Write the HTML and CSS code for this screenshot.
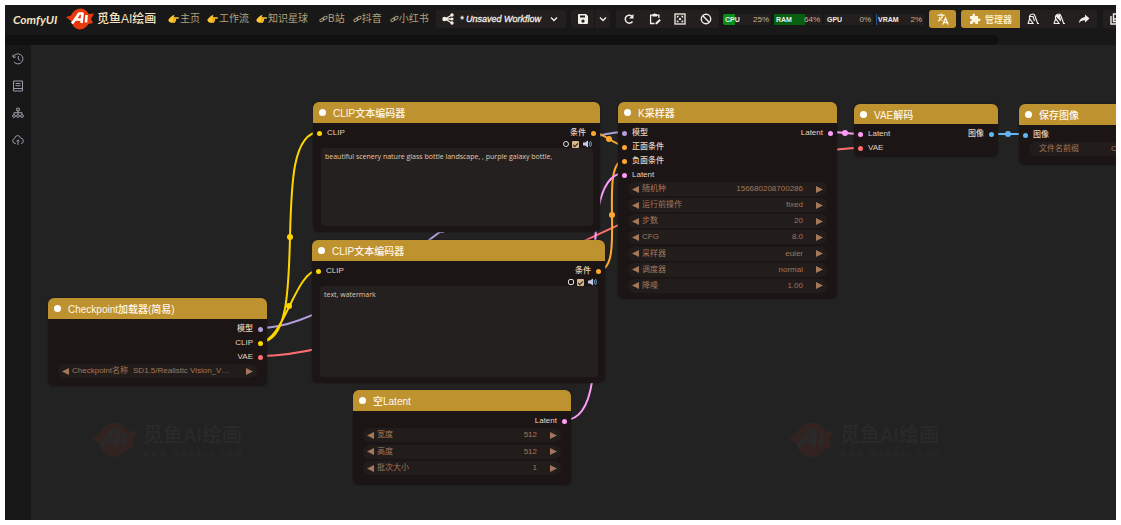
FILE: index.html
```html
<!DOCTYPE html>
<html lang="zh-CN">
<head>
<meta charset="utf-8">
<title>ComfyUI</title>
<link rel="stylesheet" href="styles.css">
</head>
<body>
<svg class="defs" aria-hidden="true">
  <symbol id="hand" viewBox="0 0 12 10"><path fill="#ffc62e" d="M0.5 5.5 3 2.8 6 0.6 7.2 1.4 6 3H11q1 .1 1 .9t-1 .9H8.3q.8.4.5 1.1.3.8-.4 1.2.1.8-.6 1.1 0 .9-1 1H3.5Q1 8.8.5 7z"/><path stroke="#d9901c" stroke-width=".6" d="M5.5 4.9h3M5.5 6.2h3M5.5 7.5h2.6"/></symbol>
  <symbol id="chain" viewBox="0 0 10 8"><g fill="none" stroke="currentColor" stroke-width="1"><rect x=".8" y="3.6" width="5" height="2.8" rx="1.4" transform="rotate(-32 3.3 5)"/><rect x="4.2" y="1.5" width="5" height="2.8" rx="1.4" transform="rotate(-32 6.7 2.9)"/></g></symbol>
  <symbol id="logo" viewBox="0 0 28 22"><path class="splash" d="M0 9 5 7.500Q8 1 14 .5 20 .5 22.500 6L28 5.500 25 11 27 15 22.500 16Q19 21.500 13 21.500 7 20.500 5 13z"/><path fill="none" stroke="currentColor" stroke-width="2.600" stroke-linejoin="round" d="M6 15.500Q11 9 13 5.500H16.500L15.500 15M10 11.500H15.500M20.500 7 20 14.500"/></symbol>
  <symbol id="down" viewBox="0 0 8 6"><path fill="none" stroke="currentColor" stroke-width="1.400" d="m1 1.500 3 3 3-3"/></symbol>
  <symbol id="larrow" viewBox="0 0 7 7"><path fill="currentColor" d="M7 0v7L0 3.500z"/></symbol>
  <symbol id="rarrow" viewBox="0 0 7 7"><path fill="currentColor" d="M0 0v7l7-3.500z"/></symbol>
  <symbol id="speaker" viewBox="0 0 9 8"><path fill="#c9c9dd" d="M0 2.500h2L5 .5v7L2 5.500H0z"/><path fill="none" stroke="#6a9cc4" d="M6 2q1.500 2 0 4M7.500 1q2 3 0 6"/></symbol>
</svg>
<div class="app">
  <header class="topbar">
    <h1 class="brand">ComfyUI</h1>
    <svg class="logo"><use href="#logo"/></svg>
    <span class="studio">觅鱼AI绘画</span>
    <nav class="links">
      <a href="#"><svg class="hand"><use href="#hand"/></svg>主页</a>
      <a href="#"><svg class="hand"><use href="#hand"/></svg>工作流</a>
      <a href="#"><svg class="hand"><use href="#hand"/></svg>知识星球</a>
    </nav>
    <nav class="links social">
      <a href="#"><svg class="chain"><use href="#chain"/></svg>B站</a>
      <a href="#"><svg class="chain"><use href="#chain"/></svg>抖音</a>
      <a href="#"><svg class="chain"><use href="#chain"/></svg>小红书</a>
    </nav>
    <button class="group workflow">
      <svg class="icon" viewBox="0 0 12 12"><path fill="none" stroke="currentColor" stroke-width="1.300" d="M10 2 3 6l7 4M3 6h7"/><g fill="currentColor"><circle cx="2.500" cy="6" r="2.200"/><circle cx="10" cy="2" r="1.700"/><circle cx="10" cy="6" r="1.500"/><circle cx="10" cy="10" r="1.700"/></g></svg>
      <span>* Unsaved Workflow</span>
      <svg class="down"><use href="#down"/></svg>
    </button>
    <div class="group save">
      <button aria-label="Save"><svg class="icon" viewBox="0 0 12 12"><path fill="currentColor" fill-rule="evenodd" d="M2 1h7l2 2v7q0 1-1 1H2q-1 0-1-1V2q0-1 1-1zM3 2.500v2h5v-2zM6 6.500a1.600 1.600 0 1 0 .01 0z"/></svg></button>
      <button class="more" aria-label="Save options"><svg class="down"><use href="#down"/></svg></button>
    </div>
    <div class="group tools">
      <button aria-label="Refresh"><svg class="icon" viewBox="0 0 12 12"><path fill="none" stroke="currentColor" stroke-width="1.500" d="M9.500 8.500A4 4 0 1 1 9 3.200"/><path fill="currentColor" d="M10.500 1v4.500H6z"/></svg></button>
      <button aria-label="Clipspace"><svg class="icon" viewBox="0 0 12 12"><path fill="none" stroke="currentColor" stroke-width="1.300" d="M5.500 10.500H1.600V2.200h8.300V5"/><path fill="currentColor" d="M3.500 1h1.300q.9-1.300 1.900 0H8v2.500H3.500zM6.500 9.800 10.400 6l1.400 1.400-3.800 3.800H6.500z"/></svg></button>
      <button aria-label="Fit view"><svg class="icon" viewBox="0 0 12 12"><rect x="1" y="1" width="10" height="10" fill="none" stroke="currentColor" stroke-width="1.300"/><path fill="currentColor" d="M2.800 2.800h2.500L2.800 5.300zM9.200 2.800v2.500L6.700 2.800zM2.800 9.200V6.700l2.500 2.500zM9.200 9.200H6.700l2.500-2.500zM6 4.500 7.500 6 6 7.500 4.500 6z"/></svg></button>
      <button aria-label="Clear"><svg class="icon" viewBox="0 0 12 12"><g fill="none" stroke="currentColor" stroke-width="1.400"><circle cx="6" cy="6" r="4.700"/><path d="m2.800 2.800 6.400 6.400"/></g></svg></button>
    </div>
    <div class="meters">
      <div class="meter cpu"><b>CPU</b><span>25%</span></div>
      <div class="meter ram"><b>RAM</b><span>64%</span></div>
      <div class="meter"><b>GPU</b><span>0%</span></div>
      <div class="meter vram"><b>VRAM</b><span>2%</span></div>
    </div>
    <button class="group gold translate" aria-label="Translate"><svg class="icon" viewBox="0 0 12 12"><path fill="none" stroke="currentColor" stroke-width="1.300" d="M.5 2.200h7.200M4 .5v1.700M1 8.200Q5 5.500 6 2.200M2 4q1.500 2.500 3.500 3.500M5.800 11.500 8.500 5l2.700 6.500M6.800 9.500h3.400"/></svg></button>
    <div class="group manager">
      <button class="gold"><svg class="icon" viewBox="0 0 12 12"><path fill="currentColor" d="M1 3h2.500Q3 .6 4.800.5 6.500.6 6 3h3v2.700q2.500-.5 2.500 1.200T9 8.200V11H6.400Q6.500 9 5 9t-1.400 2H1V8.200q1.800.1 1.800-1.300T1 5.700z"/></svg><span>管理器</span></button>
      <button aria-label="Unload models"><svg class="icon" viewBox="0 0 12 12"><path fill="none" stroke="currentColor" stroke-width="1.200" d="M.6 10.500H6L2.500 5.300V3.200Q3.300 1 5.600 1 7.500 1 8 3l2.600 7.500H12M3 3.500h3L7.500 8M2.600 6 1.200 10"/></svg></button>
      <button aria-label="Free cache"><svg class="icon" viewBox="0 0 12 12"><path fill="none" stroke="currentColor" stroke-width="1.200" d="M.6 10.500H6L2.500 5.300V3.200Q3.300 1 5.600 1 7.500 1 8 3l2.600 7.500H12M3 3.500h3L7.500 8M2.600 6 1.200 10"/><path fill="currentColor" d="M3 2h4l1 6-4-3z"/></svg></button>
      <button aria-label="Share"><svg class="icon" viewBox="0 0 12 12"><path fill="currentColor" d="M7 1.500 11.500 5.500 7 9.500V7.200Q3 7 .8 10.300 1.500 4.500 7 3.900z"/></svg></button>
    </div>
    <button class="group panel" aria-label="Queue"><svg class="icon" viewBox="0 0 12 12"><path fill="none" stroke="currentColor" stroke-width="1.400" d="M1 3v8h8M3.500 1h8v7.500h-8zM3.500 6h8"/></svg></button>
  </header>
  <div class="strip"><div class="strip-bar"></div></div>
  <div class="work">
    <aside class="sidebar">
      <button aria-label="历史"><svg viewBox="0 0 12 12"><path d="M1 1.500V4.200h2.800M1.300 4A5 5 0 1 1 2 9M6.300 3v3.300l2 1.200"/></svg></button>
      <button aria-label="节点"><svg viewBox="0 0 12 12"><path d="M1.500 1h9v10h-9zM1.500 8.500h9M3.500 3.500h5M3.500 5.700h5"/></svg></button>
      <button aria-label="模型"><svg viewBox="0 0 12 12"><path d="M4.700 1.200h2.600v2.500H4.700zM6 3.700v3.500M2 7.500V5.700h8v1.800"/><circle cx="2" cy="9" r="1.400"/><circle cx="6" cy="9" r="1.400"/><circle cx="10" cy="9" r="1.400"/></svg></button>
      <button aria-label="上传"><svg viewBox="0 0 12 12"><path d="M3.800 9.500Q.8 9.500.7 7 .8 4.800 2.600 4.600 3 1.700 5.700 1.600 8 1.700 8.600 4.100q2.600.1 2.800 2.700-.2 2.600-2.400 2.700M6 11V6M4.300 7.500 6 5.800l1.700 1.700"/></svg></button>
    </aside>
    <main class="canvas">
      <div class="watermark mark-a"><svg class="mark-logo"><use href="#logo"/></svg><p><b>觅鱼AI绘画</b><small>www.meeeyo.com</small></p></div>
      <div class="watermark mark-b"><svg class="mark-logo"><use href="#logo"/></svg><p><b>觅鱼AI绘画</b><small>www.meeeyo.com</small></p></div>
      <svg class="wires" viewBox="31 45 1085 475">
        <g class="purple"><path d="M260 328C364 328 521 132 625 132"/><circle cx="442" cy="230" r="3"/></g>
        <g class="red"><path d="M260 356C419 356 702 148 861 148"/></g>
        <g class="yellow"><path d="M260 342C315 342 265 132 320 132M260 342C284 342 295 270 319 270"/><circle cx="290" cy="237" r="3"/><circle cx="289" cy="306" r="3"/></g>
        <g class="orange"><path d="M593 132C602 132 616 146 625 146M599 270C627 270 597 160 625 160"/><circle cx="609" cy="139" r="3"/><circle cx="612" cy="215" r="3"/></g>
        <g class="pink"><path d="M565 420C628 420 562 173 625 173M830 132C838 132 853 134 861 134"/><circle cx="845" cy="133" r="3"/></g>
        <g class="blue"><path d="M991 134H1026"/><circle cx="1008" cy="134" r="3"/></g>
      </svg>

      <section class="node checkpoint">
        <h2>Checkpoint加载器(简易)</h2>
        <div class="slots">
          <div class="slot"><span class="out purple">模型</span></div>
          <div class="slot"><span class="out yellow">CLIP</span></div>
          <div class="slot"><span class="out red">VAE</span></div>
        </div>
        <div class="widgets">
          <div class="widget"><button aria-label="上一个"><svg><use href="#larrow"/></svg></button><span>Checkpoint名称</span><output class="name">SD1.5/Realistic Vision_V…</output><button aria-label="下一个"><svg><use href="#rarrow"/></svg></button></div>
        </div>
      </section>

      <section class="node clip-a">
        <h2>CLIP文本编码器</h2>
        <div class="slots"><div class="slot"><span class="in yellow">CLIP</span><span class="out orange">条件</span></div></div>
        <div class="mini"><i class="ring"></i><input type="checkbox" checked aria-label="启用"><svg><use href="#speaker"/></svg></div>
        <textarea aria-label="正面提示词" spellcheck="false">beautiful scenery nature glass bottle landscape, , purple galaxy bottle,</textarea>
      </section>

      <section class="node clip-b">
        <h2>CLIP文本编码器</h2>
        <div class="slots"><div class="slot"><span class="in yellow">CLIP</span><span class="out orange">条件</span></div></div>
        <div class="mini"><i class="ring"></i><input type="checkbox" checked aria-label="启用"><svg><use href="#speaker"/></svg></div>
        <textarea aria-label="负面提示词" spellcheck="false">text, watermark</textarea>
      </section>

      <section class="node latent">
        <h2>空Latent</h2>
        <div class="slots"><div class="slot"><span class="out pink">Latent</span></div></div>
        <div class="widgets">
          <div class="widget"><button aria-label="减"><svg><use href="#larrow"/></svg></button><span>宽度</span><output>512</output><button aria-label="加"><svg><use href="#rarrow"/></svg></button></div>
          <div class="widget"><button aria-label="减"><svg><use href="#larrow"/></svg></button><span>高度</span><output>512</output><button aria-label="加"><svg><use href="#rarrow"/></svg></button></div>
          <div class="widget"><button aria-label="减"><svg><use href="#larrow"/></svg></button><span>批次大小</span><output>1</output><button aria-label="加"><svg><use href="#rarrow"/></svg></button></div>
        </div>
      </section>

      <section class="node sampler">
        <h2>K采样器</h2>
        <div class="slots">
          <div class="slot"><span class="in purple">模型</span><span class="out pink">Latent</span></div>
          <div class="slot"><span class="in orange">正面条件</span></div>
          <div class="slot"><span class="in orange">负面条件</span></div>
          <div class="slot"><span class="in pink">Latent</span></div>
        </div>
        <div class="widgets">
          <div class="widget"><button aria-label="减"><svg><use href="#larrow"/></svg></button><span>随机种</span><output>156680208700286</output><button aria-label="加"><svg><use href="#rarrow"/></svg></button></div>
          <div class="widget"><button aria-label="减"><svg><use href="#larrow"/></svg></button><span>运行前操作</span><output>fixed</output><button aria-label="加"><svg><use href="#rarrow"/></svg></button></div>
          <div class="widget"><button aria-label="减"><svg><use href="#larrow"/></svg></button><span>步数</span><output>20</output><button aria-label="加"><svg><use href="#rarrow"/></svg></button></div>
          <div class="widget"><button aria-label="减"><svg><use href="#larrow"/></svg></button><span>CFG</span><output>8.0</output><button aria-label="加"><svg><use href="#rarrow"/></svg></button></div>
          <div class="widget"><button aria-label="减"><svg><use href="#larrow"/></svg></button><span>采样器</span><output>euler</output><button aria-label="加"><svg><use href="#rarrow"/></svg></button></div>
          <div class="widget"><button aria-label="减"><svg><use href="#larrow"/></svg></button><span>调度器</span><output>normal</output><button aria-label="加"><svg><use href="#rarrow"/></svg></button></div>
          <div class="widget"><button aria-label="减"><svg><use href="#larrow"/></svg></button><span>降噪</span><output>1.00</output><button aria-label="加"><svg><use href="#rarrow"/></svg></button></div>
        </div>
      </section>

      <section class="node decode">
        <h2>VAE解码</h2>
        <div class="slots">
          <div class="slot"><span class="in pink">Latent</span><span class="out blue">图像</span></div>
          <div class="slot"><span class="in red">VAE</span></div>
        </div>
      </section>

      <section class="node image">
        <h2>保存图像</h2>
        <div class="slots"><div class="slot"><span class="in blue">图像</span></div></div>
        <div class="widgets"><div class="widget text"><span>文件名前缀</span><output>ComfyUI</output></div></div>
      </section>
    </main>
  </div>
</div>
</body>
</html>
```

FILE: styles.css
```css
* { box-sizing: border-box; }
body {
  margin: 0;
  padding: 5px;
  height: 100vh;
  background: #fff;
  font-family: "Liberation Sans", "Noto Sans CJK SC", sans-serif;
  overflow: hidden;
}
button {
  border: 0;
  padding: 0;
  background: none;
  color: inherit;
  font: inherit;
  display: flex;
  align-items: center;
  justify-content: center;
}
svg { display: block; flex: none; }
.defs { position: absolute; width: 0; height: 0; }
.splash { fill: #e8380d; }
.app {
  height: 100%;
  display: flex;
  flex-direction: column;
  background: #181818;
  overflow: hidden;
}

/* top bar */
.topbar {
  display: flex;
  align-items: center;
  height: 30px;
  flex: none;
  padding: 0 0 2px 8px;
  color: #f2eee8;
  white-space: nowrap;
}
.topbar > * { flex: none; }
.brand {
  margin: 0;
  width: 53px;
  font: italic 700 12px Lato, sans-serif;
  color: #f3e3c2;
}
.logo { width: 28px; height: 22px; color: #fff; }
.studio {
  width: 74px;
  padding-left: 3px;
  font-size: 12px;
  font-weight: 500;
  line-height: 18px;
  color: #f3e3c2;
}
.links { display: flex; gap: 7px; width: 151px; }
.links a {
  display: flex;
  align-items: center;
  font-size: 10px;
  line-height: 16px;
  color: #b0a27e;
  text-decoration: none;
}
.social { width: 117px; gap: 8px; }
.hand { width: 11px; height: 10px; margin-right: 1px; }
.chain { width: 9px; height: 8px; }
.group {
  display: flex;
  height: 18px;
  border-radius: 3px;
  background: #241f1f;
  overflow: hidden;
}
.icon { width: 12px; height: 12px; }
.down { width: 8px; height: 6px; }
.workflow {
  width: 130px;
  gap: 6px;
  margin-right: 5px;
  padding: 0 8px 0 6px;
  font-size: 9px;
  font-style: italic;
  -webkit-text-stroke: 0.3px currentColor;
}
.workflow .down { margin-left: auto; }
.save { width: 39px; margin-right: 6px; }
.save button { flex: 1; }
.save .more { flex: 0 0 16px; border-left: 1px solid #161616; }
.tools { width: 103px; margin-right: 4px; }
.tools button { flex: 1; }
.meters { display: flex; gap: 3px; margin-right: 5px; }
.meter {
  display: flex;
  justify-content: space-between;
  width: 48px;
  height: 11px;
  padding: 0 2px;
  background: #241f1f;
  font-size: 8px;
  line-height: 11px;
}
.meter b { font-size: 7px; }
.meter span { color: #d0b08c; }
.cpu { background: linear-gradient(90deg, #0b8c17 25%, #241f1f 25%); border-radius: 2px; }
.ram { background: linear-gradient(90deg, #075f10 64%, #241f1f 64%); }
.vram { background: linear-gradient(90deg, #1d5794 2%, #241f1f 2%); }
.gold { background: #bf9230; color: #fff6df; }
.translate { width: 27px; margin-right: 5px; }
.manager { width: 136px; margin-right: 6px; }
.manager button { flex: 1; }
.manager .gold { flex: 0 0 59px; gap: 4px; font-size: 9px; font-weight: 500; }
.panel { width: 40px; justify-content: flex-start; padding-left: 7px; }

.strip { height: 10px; flex: none; }
.strip-bar { width: calc(100% - 118px); height: 10px; background: #101010; border-radius: 0 5px 5px 0; }

/* side bar */
.work { flex: 1; display: flex; min-height: 0; }
.sidebar {
  width: 26px;
  flex: none;
  display: flex;
  flex-direction: column;
  background: #171717;
}
.sidebar button { height: 27px; }
.sidebar svg { width: 12px; height: 12px; fill: none; stroke: #9c9caa; }

/* graph canvas */
.canvas { flex: 1; position: relative; overflow: hidden; background: #222; }
.wires { position: absolute; left: 0; top: 0; width: 1085px; height: 475px; }
.wires path { fill: none; stroke: currentColor; stroke-width: 2; }
.wires circle { fill: currentColor; }
.purple { color: #b39ddb; }
.yellow { color: #ffd500; }
.red { color: #ff6e6e; }
.orange { color: #ffa931; }
.pink { color: #ff9cf9; }
.blue { color: #64b5f6; }

.watermark { position: absolute; top: 376px; display: flex; align-items: center; gap: 6px; color: #2a2a2a; }
.mark-a { left: 60px; }
.mark-b { left: 757px; }
.mark-logo { width: 46px; height: 38px; color: #888; opacity: 0.08; }
.watermark p { margin: 0; display: flex; flex-direction: column; }
.watermark b { font-size: 20px; line-height: 26px; font-weight: 500; }
.watermark small { font-size: 9px; line-height: 10px; letter-spacing: 2px; }

.node {
  position: absolute;
  display: flex;
  flex-direction: column;
  padding-bottom: 6px;
  border-radius: 6px;
  background: #1c1515;
  box-shadow: 0 0 2px #1a1515;
}
.node h2 {
  display: flex;
  align-items: center;
  gap: 7px;
  flex: none;
  height: 21px;
  margin: 0;
  padding-left: 6px;
  border-radius: 6px 6px 0 0;
  background: #bf9230;
  color: #fff8ea;
  font-size: 10px;
  font-weight: 500;
  white-space: nowrap;
}
.node h2::before { content: ""; width: 7px; height: 7px; border-radius: 50%; background: #fff; }
.checkpoint { left: 17px; top: 253px; width: 219px; min-height: 88px; }
.clip-a { left: 282px; top: 57px; width: 287px; height: 130px; }
.clip-b { left: 281px; top: 195px; width: 293px; height: 143px; }
.latent { left: 322px; top: 345px; width: 218px; min-height: 95px; }
.sampler { left: 587px; top: 57px; width: 219px; min-height: 197px; }
.node.decode { left: 823px; top: 59px; width: 144px; min-height: 53px; padding-bottom: 2px; }
.decode h2 { height: 20px; }
.image { left: 988px; top: 59px; width: 219px; min-height: 61px; }
.slots { padding-top: 3px; }
.slot { display: flex; height: 14px; padding: 0 4px; }
.in, .out {
  display: flex;
  align-items: center;
  gap: 5px;
  font-size: 8px;
  font-weight: 500;
  line-height: 14px;
  -webkit-text-fill-color: #e6d3bd;
}
.in::before, .out::after { content: ""; width: 5px; height: 5px; border-radius: 50%; background: currentColor; }
.out { margin-left: auto; }

.widgets { display: flex; flex-direction: column; padding: 0 10px; gap: 2px; }
.widget {
  display: flex;
  align-items: center;
  height: 14px;
  padding: 0 4px;
  gap: 3px;
  border-radius: 7px;
  background: #221c1b;
  color: #a2775a;
  font-size: 8px;
  line-height: 14px;
  white-space: nowrap;
}
.widget svg { width: 7px; height: 7px; }
.widget output { margin-left: auto; margin-right: 10px; }
.widget .name { margin-left: 2px; margin-right: auto; }
.widget.text { padding: 0 10px; }
.widget.text output { margin-right: 76px; }
.sampler .widgets, .latent .widgets { flex: 1; justify-content: space-between; }
.node.latent { padding-bottom: 10px; }

.mini { display: flex; align-items: center; justify-content: flex-end; gap: 3px; height: 8px; padding-right: 8px; }
.mini svg { width: 9px; height: 8px; }
.ring { width: 6px; height: 6px; border: 1px solid #ddd; border-radius: 50%; }
.clip-b .ring { border-radius: 2px; }
.mini input {
  appearance: none;
  display: grid;
  place-items: center;
  width: 7px;
  height: 7px;
  margin: 0 1px 0 0;
  border-radius: 1px;
  background: #d8b48a;
}
.mini input::before { content: ""; width: 4px; height: 2px; border: solid #2a2020; border-width: 0 0 1px 1px; transform: rotate(-45deg); }
.node textarea {
  flex: 1;
  min-height: 0;
  margin: 0 7px 0 8px;
  padding: 4px;
  border: 0;
  border-radius: 4px;
  background: #252020;
  color: #e2c8a8;
  font: 7px/10px "Open Sans", sans-serif;
  resize: none;
  outline: 0;
}
```
